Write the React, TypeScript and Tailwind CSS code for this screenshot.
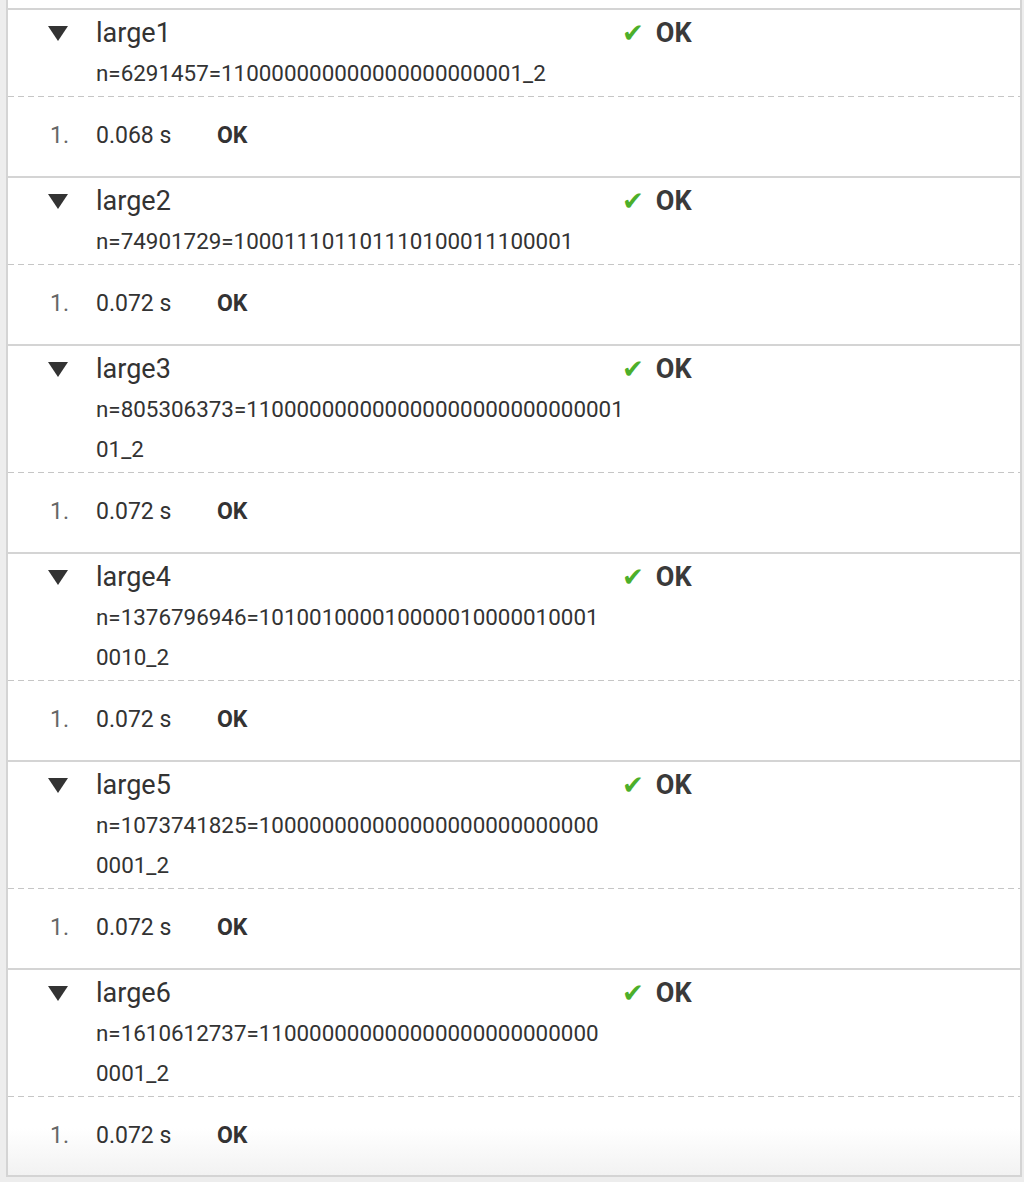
const tests = [
  { name: "large1", lines: ["n=6291457=110000000000000000000001_2"], time: "0.068 s" },
  { name: "large2", lines: ["n=74901729=100011101101110100011100001"], time: "0.072 s" },
  { name: "large3", lines: ["n=805306373=110000000000000000000000000001", "01_2"], time: "0.072 s" },
  { name: "large4", lines: ["n=1376796946=101001000010000010000010001", "0010_2"], time: "0.072 s" },
  { name: "large5", lines: ["n=1073741825=100000000000000000000000000", "0001_2"], time: "0.072 s" },
  { name: "large6", lines: ["n=1610612737=110000000000000000000000000", "0001_2"], time: "0.072 s" },
];

const Triangle = () => (
  <svg width="20" height="15" viewBox="0 0 20 15" className="shrink-0">
    <polygon points="0,0 20,0 10,15" fill="#333333" />
  </svg>
);

const TestCase = ({ test, last }: { test: (typeof tests)[number]; last: boolean }) => {
  return (
    <section className="border-t-2 border-[#d4d4d4]">
      <div className="flex items-start pl-[40px] pt-[3px] pb-[3px]">
        <div className="w-[48px] h-[40px] flex items-center">
          <Triangle />
        </div>
        <div className="w-[526px]">
          <div className="h-[40px] leading-[40px] text-[27px] text-[#333]">{test.name}</div>
          {test.lines.map((line) => (
            <div key={line} className="h-[40px] leading-[40px] text-[22.4px] text-[#333] whitespace-nowrap">
              {line}
            </div>
          ))}
        </div>
        <div className="h-[40px] flex items-center gap-[12px]">
          <span className="text-[#4caf2a] text-[26px] leading-none" style={{ fontFamily: '"DejaVu Sans", sans-serif' }}>
            ✔
          </span>
          <span className="text-[27px] font-bold text-[#3a3a3a]">OK</span>
        </div>
      </div>
      <div className="h-px bg-[linear-gradient(to_right,#c6c6c6_6px,transparent_6px)] bg-[length:10px_1px] bg-repeat-x" />
      <div
        className={`flex items-center pl-[42px] ${
          last ? "h-[78px] bg-gradient-to-b from-white from-40% to-[#f2f2f2]" : "h-[79px]"
        }`}
      >
        <span className="w-[46px] text-[23px] text-[#666]">1.</span>
        <span className="w-[121px] text-[23px] text-[#333]">{test.time}</span>
        <span className="text-[23px] font-bold text-[#333]">OK</span>
      </div>
    </section>
  );
};

export default function App() {
  return (
    <div className="w-[1024px] h-[1182px] bg-[#ededed] overflow-hidden" style={{ fontFamily: "Roboto, sans-serif" }}>
      <div className="ml-[6px] mr-[2px] bg-white border-x-2 border-b-2 border-[#d4d4d4]">
        <div className="h-[8px]" />
        {tests.map((t, i) => (
          <TestCase key={t.name} test={t} last={i === tests.length - 1} />
        ))}
      </div>
    </div>
  );
}
